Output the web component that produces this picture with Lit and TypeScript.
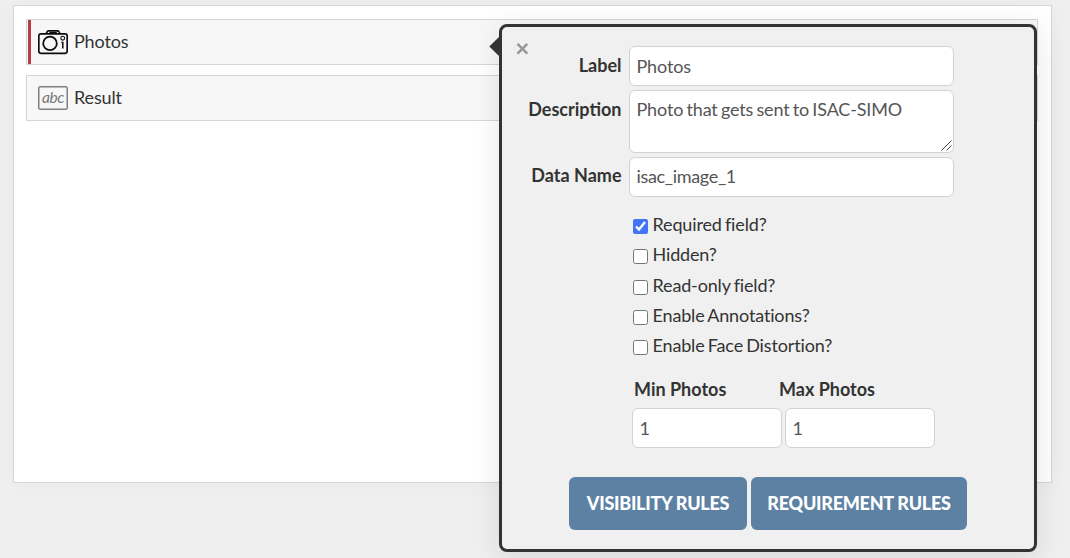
import { LitElement, html, svg, css } from "lit";
import { customElement, property, state } from "lit/decorators.js";

const cameraIcon = svg`
  <svg width="30" height="25" viewBox="0 0 30 25" fill="none" stroke="#0c0c0c">
    <rect x="0.8" y="3.9" width="28.4" height="19.4" rx="2" stroke-width="1.7" />
    <path d="M8 3.6 L9.2 1.7 Q9.7 0.9 10.5 0.9 H19.6 Q20.4 0.9 20.9 1.7 L22 3.6" stroke-width="1.6" />
    <path d="M11.4 2.6 H18.8" stroke-width="1.2" />
    <circle cx="12" cy="13.4" r="6.8" stroke-width="1.8" />
    <circle cx="24.7" cy="8.2" r="1.9" stroke-width="1.1" />
    <path d="M23.4 12.4 H24.8 V18.4" stroke-width="1.5" />
  </svg>`;

@customElement("field-row")
class FieldRow extends LitElement {
  @property() label = "";
  @property() kind = "text";
  @property({ type: Boolean, reflect: true }) required = false;

  static styles = css`
    :host {
      display: flex;
      align-items: center;
      box-sizing: border-box;
      height: 46px;
      border: 1px solid #d5d5d5;
      background: #f7f7f7;
      padding-left: 1px;
    }
    .bar { width: 3px; align-self: stretch; margin-right: 7px; }
    :host([required]) .bar { background: #b24040; }
    .icon { width: 30px; height: 24px; margin-right: 6px; display: block; }
    .icon svg { display: block; }
    .abc {
      box-sizing: border-box;
      width: 30px;
      height: 24px;
      border: 1px solid #808080;
      box-shadow: inset 0 0 0 0.5px #808080;
      border-radius: 2px;
      color: #777;
      font: italic 15.5px/21px Lato, sans-serif;
      letter-spacing: -0.4px;
      text-align: center;
    }
    .name { line-height: 24px; letter-spacing: -0.15px; padding-bottom: 2px; }
  `;

  render() {
    return html`
      <span class="bar"></span>
      <span class="icon">${this.kind === "photo" ? cameraIcon : html`<div class="abc">abc</div>`}</span>
      <span class="name">${this.label}</span>
    `;
  }
}

@customElement("field-editor")
class FieldEditor extends LitElement {
  @state() private options = [
    { label: "Required field?", on: true },
    { label: "Hidden?", on: false },
    { label: "Read-only field?", on: false },
    { label: "Enable Annotations?", on: false },
    { label: "Enable Face Distortion?", on: false },
  ];

  static styles = css`
    :host {
      display: block;
      box-sizing: border-box;
      width: 538px;
      height: 528px;
      border: 3px solid #333;
      border-radius: 8px;
      background: #f0f0f0;
      box-shadow: 0 5px 30px rgba(0, 0, 0, 0.1);
      padding-top: 19px;
    }
    .arrow {
      position: absolute;
      left: -13px;
      top: 10px;
      width: 11px;
      height: 20px;
      fill: #333;
    }
    .close {
      position: absolute;
      left: 14px;
      top: 15px;
      width: 13px;
      height: 13px;
      stroke: #959595;
      stroke-width: 2.4;
    }
    .form {
      display: grid;
      grid-template-columns: 119.5px 325px;
      column-gap: 7.5px;
      row-gap: 4px;
    }
    .form label { font-weight: 700; text-align: right; line-height: 38px; }
    .form label.data { line-height: 36px; }
    input.text, textarea {
      display: block;
      box-sizing: border-box;
      margin: 0;
      width: 100%;
      height: 40px;
      border: 1px solid #d2d2d2;
      border-radius: 6px;
      background: #fff;
      padding: 0 6.5px;
      font: inherit;
      letter-spacing: -0.15px;
      color: #555;
      outline: none;
    }
    input.data { padding-bottom: 2px; letter-spacing: -0.33px; }
    .area { position: relative; }
    textarea {
      height: 63px;
      padding-top: 6px;
      line-height: 24px;
      overflow: hidden;
      resize: none;
      word-spacing: -1.2px;
    }
    .grip {
      position: absolute;
      right: 2px;
      bottom: 2px;
      width: 11px;
      height: 11px;
      stroke: #444;
      stroke-width: 1;
    }
    .checks { margin: 13px 0 0 131px; }
    .check {
      display: flex;
      align-items: center;
      height: 30.25px;
      line-height: 30px;
      letter-spacing: -0.15px;
      word-spacing: -1.2px;
    }
    .check span { padding-bottom: 2px; line-height: 28px; }
    .check input {
      width: 15px;
      height: 15px;
      margin: 3px 4.5px 0 0;
      accent-color: #4374f8;
    }
    .limits { display: grid; grid-template-columns: 150px 150px; column-gap: 3px; margin: 14px 0 0 130px; }
    .limits label { font-weight: 700; line-height: 28px; padding: 0 0 5px 2px; }
    .limits label.max { margin-left: -8px; }
    .actions { display: flex; gap: 4px; margin: 29px 0 0 67px; }
    button {
      box-sizing: border-box;
      height: 53px;
      width: 178px;
      border: 0;
      border-radius: 6px;
      background: #5d81a3;
      color: #fff;
      padding: 0 0 2px;
      font: 900 18px Lato, sans-serif;
      letter-spacing: -0.27px;
      text-transform: uppercase;
      white-space: nowrap;
    }
    button.wide { width: 216px; }
  `;

  private toggle(i: number) {
    this.options = this.options.map((o, n) => (n === i ? { ...o, on: !o.on } : o));
  }

  render() {
    return html`
      <svg class="arrow" viewBox="0 0 11 20"><path d="M11 0 L10 0 L0.3 9.5 L10 19 L11 19 Z" /></svg>
      <svg class="close" viewBox="0 0 13 13"><path d="M1.5 1.8 L11.3 11.6 M11.3 1.8 L1.5 11.6" /></svg>
      <div class="form">
        <label for="label">Label</label>
        <input id="label" class="text" .value=${"Photos"} />
        <label for="desc">Description</label>
        <div class="area">
          <textarea id="desc" .value=${"Photo that gets sent to ISAC-SIMO"}></textarea>
          <svg class="grip" viewBox="0 0 11 11"><path d="M0.5 10.5 L10.5 0.5 M5.5 10.5 L10.5 5.5" /></svg>
        </div>
        <label for="name" class="data">Data Name</label>
        <input id="name" class="text data" .value=${"isac_image_1"} />
      </div>
      <div class="checks">
        ${this.options.map(
          (o, i) => html`<label class="check">
            <input type="checkbox" .checked=${o.on} @change=${() => this.toggle(i)} /><span>${o.label}</span>
          </label>`
        )}
      </div>
      <div class="limits">
        <label for="min">Min Photos</label>
        <label for="max" class="max">Max Photos</label>
        <input id="min" class="text" .value=${"1"} />
        <input id="max" class="text" .value=${"1"} />
      </div>
      <div class="actions">
        <button>Visibility Rules</button>
        <button class="wide">Requirement Rules</button>
      </div>
    `;
  }
}

@customElement("app-root")
class AppRoot extends LitElement {
  static styles = css`
    :host {
      display: block;
      position: relative;
      box-sizing: border-box;
      height: 558px;
      overflow: hidden;
      background: #efefef;
      padding: 5px 18px 0 13px;
      font: 18px/24px Lato, sans-serif;
      color: #333;
    }
    .canvas {
      display: flex;
      flex-direction: column;
      gap: 10px;
      box-sizing: border-box;
      height: 478px;
      border: 1px solid #d5d5d5;
      background: #fff;
      box-shadow: 0 0 20px rgba(0, 0, 0, 0.03);
      padding: 13px 13px 0 12px;
    }
    .popover { position: absolute; left: 499px; top: 24px; }
  `;

  render() {
    return html`
      <div class="canvas">
        <field-row label="Photos" kind="photo" required></field-row>
        <field-row label="Result"></field-row>
      </div>
      <field-editor class="popover"></field-editor>
    `;
  }
}
